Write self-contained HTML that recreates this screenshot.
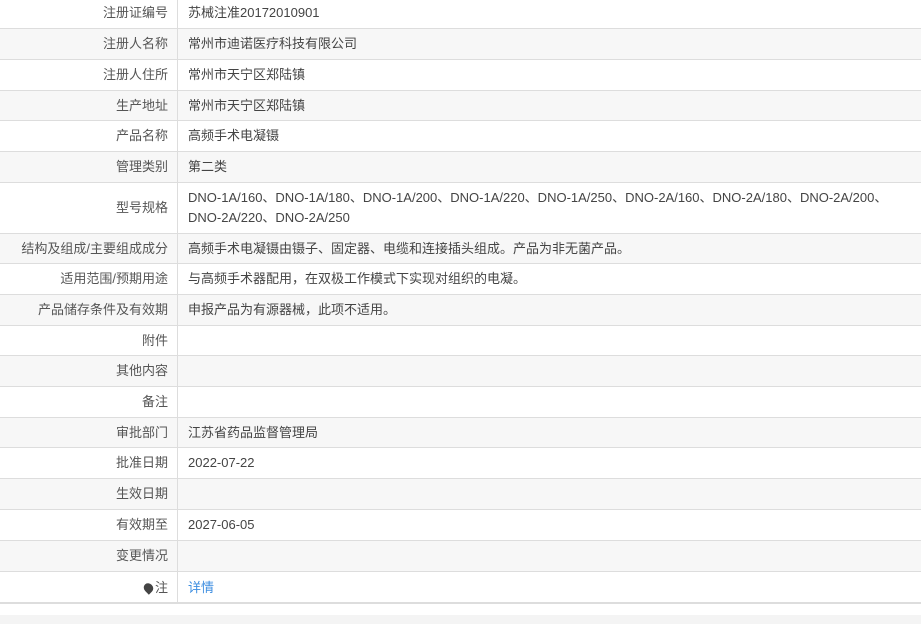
<!DOCTYPE html>
<html><head><meta charset="utf-8"><style>
html,body{margin:0;padding:0;width:921px;height:624px;overflow:hidden;background:#f4f4f4;font-family:"Liberation Sans","Noto Sans CJK SC",sans-serif;font-size:13px;color:#333}
.wrap{position:absolute;left:0;top:0;width:921px;height:615px;background:#fff}
.row{position:absolute;left:0;width:921px;border-bottom:1px solid #ddd;box-sizing:border-box}
.row.g{background:#f7f7f7}
.l{position:absolute;left:0;top:0;bottom:0;width:178px;border-right:1px solid #ddd;text-align:right;padding-right:9px;box-sizing:border-box;display:flex;align-items:center;justify-content:flex-end;color:#555;line-height:20px}
.l span.t,.v span.t{display:block;line-height:20px;height:20px}
.v{position:absolute;left:188px;top:0;bottom:0;right:0;display:flex;align-items:center;line-height:20px;color:#444}
.end{position:absolute;left:0;top:602px;width:921px;height:2px;background:#ddd}
a{color:#3d8ee0;text-decoration:none}
.dot{display:inline-block;width:9px;height:10px;background:#444;border-radius:50% 50% 50% 0;transform:rotate(-45deg);margin-right:2px;vertical-align:-1px}
</style></head><body><div class="wrap">
<div class="row" style="top:-2px;height:31px"><div class="l"><span class="t">注册证编号</span></div><div class="v">苏械注准20172010901</div></div>
<div class="row g" style="top:29px;height:31px"><div class="l"><span class="t">注册人名称</span></div><div class="v"><span class="t">常州市迪诺医疗科技有限公司</span></div></div>
<div class="row" style="top:60px;height:31px"><div class="l"><span class="t">注册人住所</span></div><div class="v"><span class="t">常州市天宁区郑陆镇</span></div></div>
<div class="row g" style="top:91px;height:30px"><div class="l"><span class="t">生产地址</span></div><div class="v"><span class="t">常州市天宁区郑陆镇</span></div></div>
<div class="row" style="top:121px;height:31px"><div class="l"><span class="t">产品名称</span></div><div class="v"><span class="t">高频手术电凝镊</span></div></div>
<div class="row g" style="top:152px;height:31px"><div class="l"><span class="t">管理类别</span></div><div class="v"><span class="t">第二类</span></div></div>
<div class="row" style="top:183px;height:51px"><div class="l"><span class="t">型号规格</span></div><div class="v" style="white-space:nowrap">DNO-1A/160、DNO-1A/180、DNO-1A/200、DNO-1A/220、DNO-1A/250、DNO-2A/160、DNO-2A/180、DNO-2A/200、<br>DNO-2A/220、DNO-2A/250</div></div>
<div class="row g" style="top:234px;height:30px"><div class="l"><span class="t">结构及组成/主要组成成分</span></div><div class="v"><span class="t">高频手术电凝镊由镊子、固定器、电缆和连接插头组成。产品为非无菌产品。</span></div></div>
<div class="row" style="top:264px;height:31px"><div class="l"><span class="t">适用范围/预期用途</span></div><div class="v"><span class="t">与高频手术器配用，在双极工作模式下实现对组织的电凝。</span></div></div>
<div class="row g" style="top:295px;height:31px"><div class="l"><span class="t">产品储存条件及有效期</span></div><div class="v"><span class="t">申报产品为有源器械，此项不适用。</span></div></div>
<div class="row" style="top:326px;height:30px"><div class="l"><span class="t">附件</span></div><div class="v"></div></div>
<div class="row g" style="top:356px;height:31px"><div class="l"><span class="t">其他内容</span></div><div class="v"></div></div>
<div class="row" style="top:387px;height:31px"><div class="l"><span class="t">备注</span></div><div class="v"></div></div>
<div class="row g" style="top:418px;height:30px"><div class="l"><span class="t">审批部门</span></div><div class="v"><span class="t">江苏省药品监督管理局</span></div></div>
<div class="row" style="top:448px;height:31px"><div class="l"><span class="t">批准日期</span></div><div class="v">2022-07-22</div></div>
<div class="row g" style="top:479px;height:31px"><div class="l"><span class="t">生效日期</span></div><div class="v"></div></div>
<div class="row" style="top:510px;height:31px"><div class="l"><span class="t">有效期至</span></div><div class="v">2027-06-05</div></div>
<div class="row g" style="top:541px;height:31px"><div class="l"><span class="t">变更情况</span></div><div class="v"></div></div>
<div class="row" style="top:572px;height:31px;border-bottom:none"><div class="l"><span class="t"><span class="dot"></span>注</span></div><div class="v"><a class="t" style="display:block;line-height:20px;height:20px">详情</a></div></div>
<div class="end"></div>
</div></body></html>
